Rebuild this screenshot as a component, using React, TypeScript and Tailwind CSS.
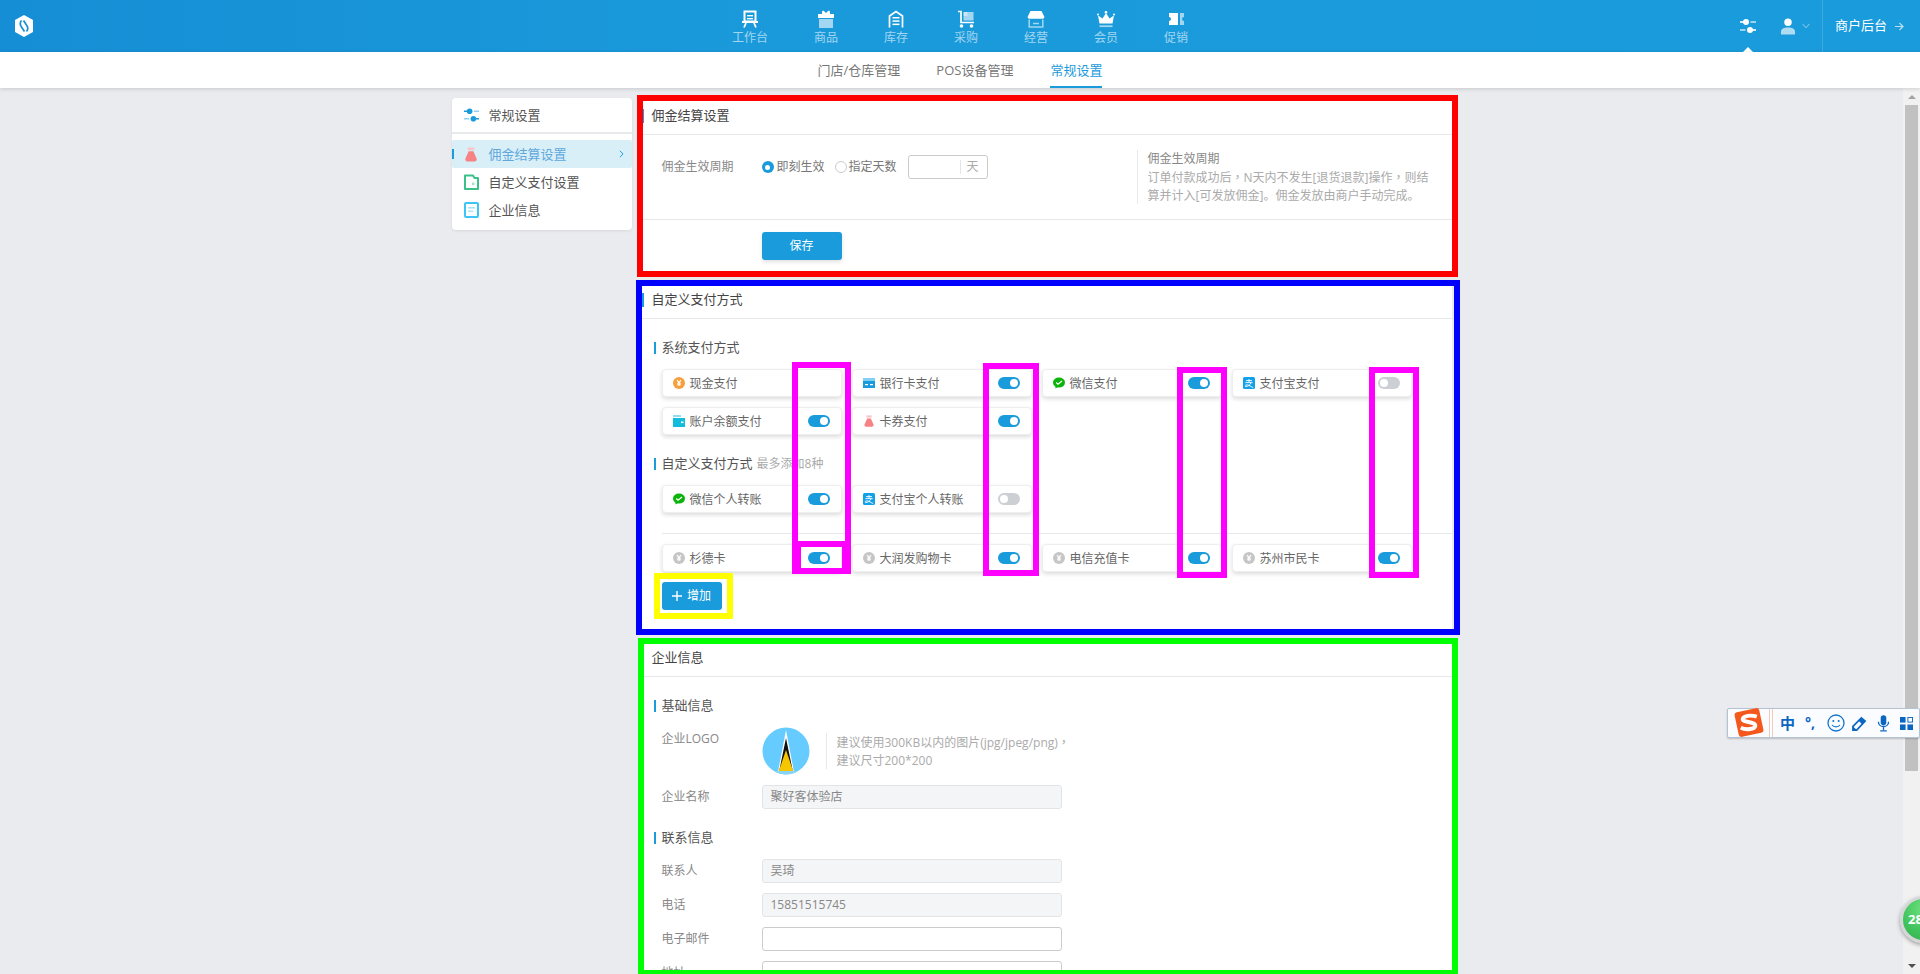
import React from "react";

const W = "#ffffff";
const L = "rgba(255,255,255,0.6)";

function Sliders({ dot, line, className }: { dot: string; line: string; className?: string }) {
  return (
    <svg viewBox="0 0 16 14" className={className}>
      <rect x="0" y="2.200" width="4" height="1.600" fill={dot} />
      <circle cx="6" cy="3" r="3" fill={dot} />
      <rect x="10.500" y="2.200" width="5.500" height="1.600" fill={line} />
      <rect x="0" y="10.200" width="5.500" height="1.600" fill={line} />
      <circle cx="10" cy="11" r="3" fill={dot} />
      <rect x="12" y="10.200" width="4" height="1.600" fill={dot} />
    </svg>
  );
}

function Bag({ className }: { className?: string }) {
  return (
    <svg viewBox="0 0 14 16" className={className}>
      <rect x="3.500" y="0.500" width="7" height="3" fill="#f9c7c7" />
      <path d="M4.500 4.500h5l3.500 8c.4 1.700-.6 3-2.200 3H3.200c-1.600 0-2.600-1.300-2.200-3z" fill="#f58383" />
    </svg>
  );
}

function Coin({ color }: { color: string }) {
  return (
    <svg viewBox="0 0 12 12" className="w-[12px] h-[12px] shrink-0">
      <circle cx="6" cy="6" r="6" fill={color} />
      <path d="M4 3.200 6 5.600 8 3.200M6 5.600V9M4.200 6.200h3.600M4.200 7.800h3.600" stroke="#fff" strokeWidth="1.100" fill="none" />
    </svg>
  );
}

function WeChat() {
  return (
    <svg viewBox="0 0 12 12" className="w-[12px] h-[12px] shrink-0">
      <ellipse cx="6" cy="5.600" rx="6" ry="5" fill="#0bb30b" />
      <path d="M2.600 9 2.400 11.600 5 10z" fill="#0bb30b" />
      <path d="M3.200 5.600 5 7.200 9 4" stroke="#fff" strokeWidth="1.300" fill="none" />
    </svg>
  );
}

function Alipay() {
  return (
    <svg viewBox="0 0 12 12" className="w-[12px] h-[12px] shrink-0">
      <rect width="12" height="12" rx="1.500" fill="#12a0e8" />
      <path d="M3 3.600h6M6 2v3M2.400 5.600h7.200M8 5.800C7 8.200 5 9.400 2.600 9.600c-1.400-1.600 1-3 5.600 0l2 1" stroke="#fff" strokeWidth="0.900" fill="none" />
    </svg>
  );
}

function BankCard() {
  return (
    <svg viewBox="0 0 12 12" className="w-[12px] h-[12px] shrink-0">
      <rect x="0" y="1" width="12" height="3" fill="#7fd0f2" />
      <rect x="0" y="4" width="12" height="7" fill="#1a9bdb" />
      <rect x="2" y="7" width="3" height="1.200" fill="#fff" />
      <rect x="7" y="7" width="3" height="1.200" fill="#fff" />
    </svg>
  );
}

function Wallet() {
  return (
    <svg viewBox="0 0 12 12" className="w-[12px] h-[12px] shrink-0">
      <rect x="0" y="0" width="8" height="2" fill="#8fdcef" />
      <rect x="0" y="3" width="12" height="9" fill="#12bcdc" />
      <rect x="8" y="6.500" width="2.500" height="1.600" fill="#fff" />
    </svg>
  );
}

function Toggle({ on }: { on: boolean }) {
  return (
    <span className={`flex items-center w-[22px] h-[12px] rounded-full px-[2px] ${on ? "bg-[#1a9bdb] justify-end" : "bg-[#ccd0d4] justify-start"}`}>
      <span className="w-[8px] h-[8px] rounded-full bg-white" />
    </span>
  );
}

function Chip({ icon, label, on }: { icon: React.ReactNode; label: string; on?: boolean }) {
  return (
    <div className="flex items-center h-[28px] w-[180px] pl-[10px] pr-[11px] bg-white rounded-[4px] border border-[#eeeeee] shadow-[0_2px_4px_rgba(0,0,0,0.14)]">
      {icon}
      <span className="ml-[5px] pt-[1px] text-[12px] text-[#666666]">{label}</span>
      <span className="ml-auto">{on === undefined ? null : <Toggle on={on} />}</span>
    </div>
  );
}

function CardTitle({ children }: { children: React.ReactNode }) {
  return (
    <div className="flex items-center h-[37px] border-b border-[#e6e8eb]">
      <span className="w-[4px] h-[14px] bg-[#1a9bdb] mr-[8px]" />
      <span className="text-[13px] text-[#444444]">{children}</span>
    </div>
  );
}

function SectionHead({ children, note, mt }: { children: React.ReactNode; note?: string; mt: string }) {
  return (
    <div className={`flex items-center h-[18px] pl-[14px] ${mt}`}>
      <span className="w-[2px] h-[12px] bg-[#1a9bdb] mr-[6px]" />
      <span className="text-[13px] text-[#555555]">{children}</span>
      {note ? <span className="ml-[4px] text-[12px] text-[#aaaaaa]">{note}</span> : null}
    </div>
  );
}

function Field({ label, value, editable, mt }: { label: string; value?: string; editable?: boolean; mt: string }) {
  return (
    <div className={`flex items-center pl-[22px] ${mt}`}>
      <span className="w-[100px] text-[12px] text-[#888888]">{label}</span>
      <div className={`flex items-center w-[300px] h-[24px] px-[8px] rounded-[3px] border text-[12px] text-[#888888] ${editable ? "bg-white border-[#cccccc]" : "bg-[#f4f5f7] border-[#e2e4e7]"}`}>
        {value}
      </div>
    </div>
  );
}

const Comma = () => <span className="font-['Noto_Sans_CJK_TC',sans-serif]">，</span>;

const navItems: { label: string; icon: React.ReactNode }[] = [
  {
    label: "工作台",
    icon: (
      <svg viewBox="0 0 18 18" className="w-[18px] h-[18px]">
        <path d="M3.500 1.500h11v10h-11z" fill="none" stroke={W} strokeWidth="2" />
        <rect x="6" y="5" width="6" height="1.400" fill={W} />
        <rect x="6" y="8" width="6" height="1.400" fill={W} />
        <rect x="1" y="11" width="16" height="2" fill={W} />
        <path d="M5 13 3 17.500M13 13l2 4.500" stroke={W} strokeWidth="1.800" />
      </svg>
    ),
  },
  {
    label: "商品",
    icon: (
      <svg viewBox="0 0 18 18" className="w-[18px] h-[18px]">
        <path d="M5 4V2.200C5 1 6.200.6 7 1l2 2 2-2c.8-.4 2 0 2 1.200V4h4v4H1V4z" fill={W} />
        <rect x="2" y="9" width="14" height="9" fill={L} />
      </svg>
    ),
  },
  {
    label: "库存",
    icon: (
      <svg viewBox="0 0 18 18" className="w-[18px] h-[18px]">
        <path d="M2.500 17.500V6L9 1.500 15.500 6v11.500" fill="none" stroke={W} strokeWidth="1.700" />
        <rect x="5.500" y="7" width="7" height="1.500" fill={W} />
        <rect x="5.500" y="10.300" width="7" height="1.500" fill={W} />
        <rect x="5.500" y="13.600" width="7" height="1.500" fill={W} />
      </svg>
    ),
  },
  {
    label: "采购",
    icon: (
      <svg viewBox="0 0 18 18" className="w-[18px] h-[18px]">
        <path d="M1 1.500h3v11h13" fill="none" stroke={W} strokeWidth="1.700" />
        <rect x="6.500" y="2" width="10" height="8.500" fill={L} />
        <rect x="6.500" y="2" width="4" height="4" fill={W} fillOpacity="0.4" />
        <circle cx="4.500" cy="16" r="1.800" fill={W} />
        <circle cx="14.500" cy="16" r="1.800" fill={W} />
      </svg>
    ),
  },
  {
    label: "经营",
    icon: (
      <svg viewBox="0 0 18 18" className="w-[18px] h-[18px]">
        <path d="M3.500 1h11L17.500 7a2 2 0 0 1-2 1.800H2.500A2 2 0 0 1 .5 7z" fill={W} />
        <path d="M2.200 9.500v7.500h13.600V9.500M6 13.500h6" fill="none" stroke={L} strokeWidth="1.500" />
      </svg>
    ),
  },
  {
    label: "会员",
    icon: (
      <svg viewBox="0 0 18 18" className="w-[18px] h-[18px]">
        <path d="M2.500 13.500 1 5.500l4.500 3L9 3l3.500 5.500 4.500-3-1.500 8z" fill={W} />
        <circle cx="9" cy="2.200" r="1.300" fill={W} />
        <circle cx="1" cy="4.600" r="1" fill={W} />
        <circle cx="17" cy="4.600" r="1" fill={W} />
        <rect x="2.500" y="15.300" width="13" height="1.800" fill={L} />
      </svg>
    ),
  },
  {
    label: "促销",
    icon: (
      <svg viewBox="0 0 18 18" className="w-[18px] h-[18px]">
        <path d="M2 3h9v12H2v-4a2 2 0 0 0 0-4z" fill={W} />
        <path d="M13 3h4v4a2 2 0 0 0 0 4v4h-4z" fill={L} />
      </svg>
    ),
  },
];

const gray = "#c6c6c6";

function Box({ className }: { className: string }) {
  return <div className={`absolute pointer-events-none ${className}`} />;
}

export default function App() {
  return (
    <div className="relative flex flex-col h-[974px] overflow-hidden bg-[#eaebef] [text-spacing-trim:space-all] font-['Open_Sans','Noto_Sans_CJK_SC',sans-serif]">
      <header className="flex items-stretch h-[52px] shrink-0 bg-[linear-gradient(90deg,#168ed5,#1a9adb_40%,#1a9bdb)]">
        <div className="flex-1 flex items-center">
          <svg viewBox="0 0 18 22" className="ml-[15px] w-[18px] h-[22px]">
            <path d="M9 0 18 5v12l-9 5-9-5V5z" fill="#fff" />
            <path d="M6.500 5.500C4.500 8 5 10 6.500 12l3 4.500M11.500 16.500C13.500 14 13 12 11.500 10l-3-4.500" stroke="#1890d5" strokeWidth="1.700" fill="none" />
          </svg>
        </div>
        <nav className="flex">
          {navItems.map((n) => (
            <div key={n.label} className="flex flex-col items-center pt-[10px] px-[23px]">
              {n.icon}
              <span className="mt-[2px] text-[12px] leading-[16px] text-white/60">{n.label}</span>
            </div>
          ))}
        </nav>
        <div className="flex-1 flex items-center justify-end">
          <div className="relative flex items-center justify-center self-stretch w-[18px]">
            <Sliders dot="#ffffff" line="rgba(255,255,255,0.7)" className="w-[16px] h-[14px]" />
            <span className="absolute bottom-0 left-[4px] w-0 h-0 border-x-[5px] border-x-transparent border-b-[5px] border-b-white" />
          </div>
          <svg viewBox="0 0 15 17" className="ml-[24px] w-[14px] h-[17px]">
            <circle cx="7.500" cy="4" r="4" fill="#fff" />
            <path d="M0 17v-3c0-3 3-4.500 7.500-4.500S15 11 15 14v3z" fill="rgba(255,255,255,0.65)" />
          </svg>
          <svg viewBox="0 0 9 6" className="ml-[7px] w-[8px] h-[6px]">
            <path d="M.5.5 4.500 5 8.500.5" stroke="rgba(255,255,255,0.6)" fill="none" />
          </svg>
          <div className="ml-[12px] flex items-center self-stretch border-l border-white/15 pl-[12px] pr-[16px]">
            <span className="text-[13px] text-white">商户后台</span>
            <svg viewBox="0 0 9 9" className="ml-[8px] w-[9px] h-[9px]">
              <path d="M0 4.500h7.500M4.500 1l3.500 3.500L4.500 8" stroke="rgba(255,255,255,0.7)" strokeWidth="1.200" fill="none" />
            </svg>
          </div>
        </div>
      </header>

      <div className="relative z-10 flex justify-center gap-[36px] h-[36px] shrink-0 bg-white shadow-[0_1px_4px_rgba(0,0,0,0.15)]">
        <span className="text-[13px] leading-[36px] text-[#777777]">门店/仓库管理</span>
        <span className="text-[13px] leading-[36px] text-[#777777]">POS设备管理</span>
        <span className="ml-[1px] text-[13px] leading-[36px] text-[#1a9bdb] border-b-[2px] border-[#1a9bdb]">常规设置</span>
      </div>

      <div className="flex flex-1 min-h-0">
        <main className="flex-1 min-w-0 overflow-hidden">
          <div className="flex items-start gap-[8px] w-[1000px] mx-auto pt-[10px]">
            <aside className="w-[180px] h-[132px] shrink-0 bg-white rounded-[4px] shadow-[0_1px_3px_rgba(0,0,0,0.08)]">
              <div className="flex items-center h-[36px] pl-[12px] border-b-[2px] border-[#e8e9ec]">
                <Sliders dot="#1a9bdb" line="#8fd2f0" className="w-[15px] h-[14px]" />
                <span className="ml-[10px] pt-[1px] text-[13px] text-[#555555]">常规设置</span>
              </div>
              <div className="mt-[6px] flex items-center h-[28px] pl-[12px] pr-[8px] bg-[#d9eff8] rounded-[2px] relative">
                <span className="absolute left-0 top-[9px] w-[2px] h-[10px] bg-[#1a9bdb]" />
                <Bag className="w-[14px] h-[15px]" />
                <span className="ml-[11px] pt-[1px] text-[13px] text-[#5fa8dc]">佣金结算设置</span>
                <svg viewBox="0 0 6 10" className="ml-auto w-[5px] h-[8px]">
                  <path d="M1 1l4 4-4 4" stroke="#1a9bdb" strokeWidth="1.200" fill="none" />
                </svg>
              </div>
              <div className="flex items-center h-[28px] pl-[12px]">
                <svg viewBox="0 0 15 16" className="w-[15px] h-[16px]">
                  <path d="M1 15V1.500h8L10.500 4H14v11z" fill="none" stroke="#3cc08a" strokeWidth="2" strokeLinejoin="round" />
                  <rect x="8" y="8.500" width="2.500" height="2.500" fill="#a5e3c7" />
                </svg>
                <span className="ml-[10px] pt-[1px] text-[13px] text-[#555555]">自定义支付设置</span>
              </div>
              <div className="flex items-center h-[28px] pl-[12px]">
                <svg viewBox="0 0 15 16" className="w-[15px] h-[16px]">
                  <rect x="1" y="1" width="13" height="14" rx="1" fill="none" stroke="#3dc6f5" strokeWidth="2" />
                  <rect x="4" y="5" width="7" height="1.600" fill="#a8e4fa" />
                  <rect x="4" y="8.500" width="5" height="1.600" fill="#a8e4fa" />
                </svg>
                <span className="ml-[10px] pt-[1px] text-[13px] text-[#555555]">企业信息</span>
              </div>
            </aside>

            <div className="w-[812px] flex flex-col gap-[10px]">
              <section className="bg-white">
                <CardTitle>佣金结算设置</CardTitle>
                <div className="flex items-start h-[85px] pl-[22px] border-b border-[#e6e8eb]">
                  <div className="flex items-center mt-[20px] h-[24px] text-[12px] text-[#666666]">
                    <span className="w-[100px] text-[#888888]">佣金生效周期</span>
                    <span className="flex items-center justify-center w-[12px] h-[12px] rounded-full bg-[#1a9bdb]">
                      <span className="w-[5px] h-[5px] rounded-full bg-white" />
                    </span>
                    <span className="ml-[3px] text-[#777777]">即刻生效</span>
                    <span className="ml-[10px] w-[12px] h-[12px] rounded-full border border-[#cccccc]" />
                    <span className="ml-[2px] text-[#777777]">指定天数</span>
                    <div className="ml-[11px] flex items-center w-[80px] h-[24px] rounded-[3px] border border-[#cccccc]">
                      <span className="ml-[51px] w-px h-[14px] bg-[#e5e5e5]" />
                      <span className="ml-[6px] text-[#aaaaaa]">天</span>
                    </div>
                  </div>
                  <div className="ml-[149px] mt-[15px] h-[54px] border-l border-[#e6e8eb] pl-[10px] text-[12px] leading-[18px] whitespace-nowrap text-[#aaaaaa]">
                    <div className="text-[#888888]">佣金生效周期</div>
                    <div>订单付款成功后<Comma />N天内不发生[退货退款]操作<Comma />则结</div>
                    <div>算并计入[可发放佣金]。佣金发放由商户手动完成。</div>
                  </div>
                </div>
                <div className="h-[52px] pt-[12px] pl-[122px]">
                  <button className="w-[80px] h-[28px] rounded-[3px] bg-[#1a9bdb] text-[12px] text-white shadow-[0_2px_4px_rgba(0,0,0,0.12)]">保存</button>
                </div>
              </section>

              <section className="bg-white pb-[20px]">
                <CardTitle>自定义支付方式</CardTitle>
                <SectionHead mt="mt-[20px]">系统支付方式</SectionHead>
                <div className="mt-[12px] ml-[22px] grid grid-cols-4 gap-[10px] w-[750px]">
                  <Chip icon={<Coin color="#f5a03c" />} label="现金支付" />
                  <Chip icon={<BankCard />} label="银行卡支付" on />
                  <Chip icon={<WeChat />} label="微信支付" on />
                  <Chip icon={<Alipay />} label="支付宝支付" on={false} />
                  <Chip icon={<Wallet />} label="账户余额支付" on />
                  <Chip icon={<Bag className="w-[12px] h-[12px] shrink-0" />} label="卡券支付" on />
                </div>
                <SectionHead mt="mt-[20px]" note="最多添加8种">自定义支付方式</SectionHead>
                <div className="mt-[12px] ml-[22px] grid grid-cols-4 gap-[10px] w-[750px]">
                  <Chip icon={<WeChat />} label="微信个人转账" on />
                  <Chip icon={<Alipay />} label="支付宝个人转账" on={false} />
                </div>
                <div className="mt-[20px] ml-[22px] border-t border-[#e6e8eb]" />
                <div className="mt-[10px] ml-[22px] grid grid-cols-4 gap-[10px] w-[750px]">
                  <Chip icon={<Coin color={gray} />} label="杉德卡" on />
                  <Chip icon={<Coin color={gray} />} label="大润发购物卡" on />
                  <Chip icon={<Coin color={gray} />} label="电信充值卡" on />
                  <Chip icon={<Coin color={gray} />} label="苏州市民卡" on />
                </div>
                <button className="mt-[10px] ml-[22px] flex items-center justify-center w-[60px] h-[28px] rounded-[3px] bg-[#1a9bdb] text-[12px] text-white">
                  <svg viewBox="0 0 10 10" className="w-[10px] h-[10px] mr-[5px]">
                    <path d="M5 0v10M0 5h10" stroke="#fff" strokeWidth="1.400" />
                  </svg>
                  增加
                </button>
              </section>

              <section className="bg-white pb-[20px]">
                <CardTitle>企业信息</CardTitle>
                <SectionHead mt="mt-[20px]">基础信息</SectionHead>
                <div className="flex items-start mt-[12px] pl-[22px]">
                  <span className="w-[100px] mt-[3px] text-[12px] leading-[18px] text-[#888888]">企业LOGO</span>
                  <svg viewBox="0 0 48 48" className="w-[48px] h-[48px]">
                    <defs>
                      <clipPath id="logoClip">
                        <circle cx="24" cy="24" r="23.500" />
                      </clipPath>
                    </defs>
                    <g clipPath="url(#logoClip)">
                      <rect width="48" height="48" fill="#66ccff" />
                      <path d="M24 3 32 45H16z" fill="#ffffff" />
                      <path d="M24 11 31 45H17z" fill="#111111" />
                      <path d="M24 23 31.500 45h-15z" fill="#f7c600" />
                      <rect x="0" y="44" width="48" height="4" fill="#88d4f2" />
                    </g>
                  </svg>
                  <div className="ml-[16px] mt-[6px] h-[36px] border-l border-[#e6e8eb] pl-[10px] text-[12px] leading-[18px] whitespace-nowrap text-[#aaaaaa]">
                    <div>建议使用300KB以内的图片(jpg/jpeg/png)<Comma /></div>
                    <div>建议尺寸200*200</div>
                  </div>
                </div>
                <Field mt="mt-[10px]" label="企业名称" value="聚好客体验店" />
                <SectionHead mt="mt-[20px]">联系信息</SectionHead>
                <Field mt="mt-[12px]" label="联系人" value="吴琦" />
                <Field mt="mt-[10px]" label="电话" value="15851515745" />
                <Field mt="mt-[10px]" label="电子邮件" editable />
                <Field mt="mt-[10px]" label="地址" editable />
              </section>
            </div>
          </div>
        </main>

        <div className="flex flex-col w-[17px] shrink-0 bg-[#f1f1f1]">
          <div className="flex items-center justify-center h-[17px]">
            <span className="w-0 h-0 border-x-[4px] border-x-transparent border-b-[4px] border-b-[#a3a3a3]" />
          </div>
          <div className="ml-[2px] w-[13px] h-[666px] bg-[#c1c1c1]" />
          <div className="mt-auto flex items-center justify-center h-[17px]">
            <span className="w-0 h-0 border-x-[4px] border-x-transparent border-t-[4px] border-t-[#505050]" />
          </div>
        </div>
      </div>

      {/* 标注框 */}
      <Box className="left-[637px] top-[95px] w-[821px] h-[182px] border-[6px] border-[#ff0000]" />
      <Box className="left-[636px] top-[280px] w-[824px] h-[355px] border-[6px] border-[#0000ff]" />
      <Box className="left-[638px] top-[638px] w-[820px] h-[338px] border-[6px] border-[#00ff00]" />
      <Box className="left-[792px] top-[362px] w-[59px] h-[185px] border-[6px] border-[#ff00ff]" />
      <Box className="left-[792px] top-[541px] w-[59px] h-[33px] border-x-[9px] border-y-[6px] border-[#ff00ff]" />
      <Box className="left-[983px] top-[363px] w-[56px] h-[213px] border-[6px] border-[#ff00ff]" />
      <Box className="left-[1177px] top-[367px] w-[50px] h-[211px] border-[6px] border-[#ff00ff]" />
      <Box className="left-[1369px] top-[367px] w-[50px] h-[211px] border-[6px] border-[#ff00ff]" />
      <Box className="left-[654px] top-[573px] w-[79px] h-[46px] border-[6px] border-[#ffff00]" />

      {/* 输入法工具条 */}
      <div className="absolute left-[1727px] top-[708px] w-[193px] h-[30px] flex items-center bg-[#fafcff] border border-[#b4c4d4] rounded-[2px] shadow-[0_1px_2px_rgba(0,0,0,0.2)]">
        <svg viewBox="0 0 32 32" className="ml-[5px] w-[32px] h-[31px] shrink-0 -mt-[1px]">
          <rect x="3" y="3" width="26" height="26" rx="3" fill="#f4581c" transform="rotate(-12 16 16)" />
          <path d="M24 10C18 8 10 9 9.500 12.500 9 16 23 15 22.500 19.500 22 23 13 24 7.500 21.500" stroke="#fff" strokeWidth="4" fill="none" />
        </svg>
        <span className="ml-[4px] w-[1px] h-[28px] bg-[#f6c9b8]" />
        <span className="ml-[2px] w-[1px] h-[28px] bg-[#f6c9b8]" />
        <span className="ml-[7px] w-[15px] text-[15px] font-bold leading-none text-[#0a66c2]">中</span>
        <span className="ml-[10px] w-[14px] text-[14px] font-bold leading-none text-[#0a66c2]">°,</span>
        <svg viewBox="0 0 18 18" className="ml-[8px] w-[18px] h-[18px]">
          <circle cx="9" cy="9" r="8" fill="none" stroke="#1473cc" strokeWidth="1.300" />
          <circle cx="6.300" cy="7" r="1" fill="#1473cc" />
          <circle cx="11.700" cy="7" r="1" fill="#1473cc" />
          <path d="M5 11c2 2.500 6 2.500 8 0" stroke="#1473cc" strokeWidth="1.200" fill="none" />
        </svg>
        <svg viewBox="0 0 16 16" className="ml-[7px] w-[15px] h-[15px]">
          <path d="M1 11 10 2l4 3.500-9 9.500H1z" fill="none" stroke="#0a66c2" strokeWidth="1.800" />
          <path d="M1 11l4 4H1z" fill="#0a66c2" />
          <path d="M7 5l4 4 3-3.500L10 2z" fill="#0a66c2" />
        </svg>
        <svg viewBox="0 0 14 18" className="ml-[10px] w-[13px] h-[17px]">
          <rect x="4" y="0" width="6" height="11" rx="3" fill="#0a66c2" />
          <path d="M1.500 7c0 7 11 7 11 0M7 13v3M3.500 17h7" stroke="#0a66c2" strokeWidth="1.400" fill="none" />
        </svg>
        <svg viewBox="0 0 14 14" className="ml-[10px] w-[13px] h-[13px]">
          <rect x="0" y="0" width="6" height="6" fill="#0a66c2" />
          <rect x="8.500" y="0.500" width="5" height="5" fill="none" stroke="#0a66c2" />
          <rect x="0" y="8" width="6" height="6" fill="#0a66c2" />
          <rect x="8" y="8" width="6" height="6" fill="#0a66c2" />
        </svg>
      </div>

      {/* 悬浮球 */}
      <div className="absolute left-[1900px] top-[896px] w-[47px] h-[47px] flex items-center pl-[5px] rounded-full border-[3px] border-[#d4d6d8] bg-[radial-gradient(circle_at_50%_25%,#6fe07f,#3fc35b_60%,#34b04f)] shadow-[0_2px_4px_rgba(0,0,0,0.35)]">
        <span className="text-[13px] font-bold text-white">28</span>
      </div>
    </div>
  );
}
